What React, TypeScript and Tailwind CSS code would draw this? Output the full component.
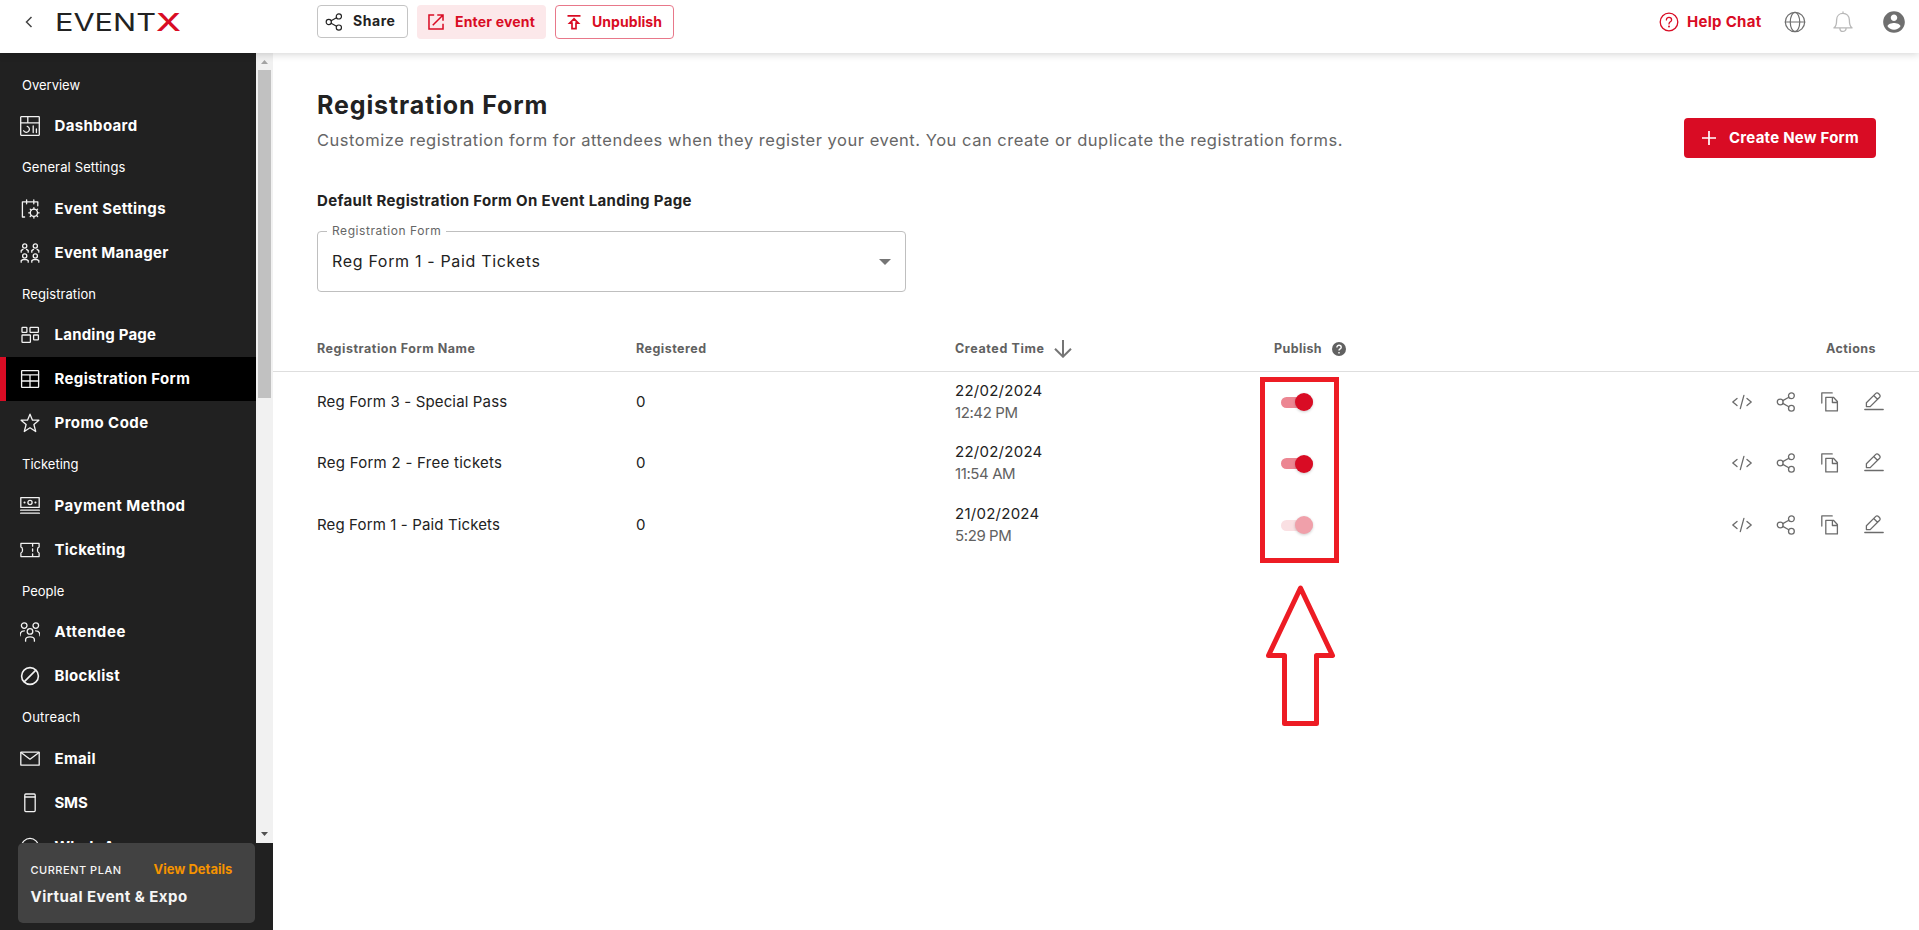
import type { ReactNode } from 'react';
import { clsx } from 'clsx';

interface IconProps {
  className?: string;
  children: ReactNode;
  size?: number;
  stroke?: number;
}

function Icon({ className, children, size = 20, stroke = 1.3 }: IconProps) {
  return (
    <svg
      width={size}
      height={size}
      viewBox="0 0 20 20"
      fill="none"
      stroke="currentColor"
      strokeWidth={stroke}
      strokeLinecap="round"
      strokeLinejoin="round"
      className={clsx('shrink-0', className)}
    >
      {children}
    </svg>
  );
}

const icons = {
  dashboard: (
    <>
      <rect x="0.7" y="0.7" width="18.6" height="18.6" rx="0.5" />
      <path d="M.7 6.9h18.6M7.8.7v6.2M7.2 10.3a3.1 3.1 0 1 1-3.6 4.5M13.2 10v6.6M16.4 13v3.6" />
    </>
  ),
  eventSettings: (
    <>
      <path d="M4.6 18H2.4V2.8h15.4v4M6.6.8v4M13.8.8v4" />
      <circle cx="13.9" cy="13.8" r="3.6" />
      <path d="M13.9 8.6v1.4M13.9 17.6V19M8.7 13.8h1.4M17.7 13.8h1.4M10.2 10.1l1 1M16.6 16.5l1 1M17.6 10.1l-1 1M11.2 16.5l-1 1" />
    </>
  ),
  eventManager: (
    <>
      <circle cx="4.7" cy="3" r="2.1" />
      <circle cx="15.3" cy="3" r="2.1" />
      <circle cx="4.7" cy="13" r="2.1" />
      <circle cx="15.3" cy="13" r="2.1" />
      <path d="M1.2 9.2V7.6L2.9 6.4M8.2 9.2V7.6L6.5 6.4M11.8 9.2V7.6l1.7-1.2M18.8 9.2V7.6l-1.7-1.2M1.2 19.2v-1.6l1.7-1h3.6l1.7 1v1.6M11.8 19.2v-1.6l1.7-1h3.6l1.7 1v1.6" />
    </>
  ),
  landing: (
    <>
      <rect x="2" y="2.4" width="4.9" height="4.9" rx="0.6" />
      <rect x="10" y="2.4" width="8.4" height="4.9" rx="0.6" />
      <rect x="2" y="10" width="8.4" height="7.4" rx="0.6" />
      <rect x="13.6" y="10" width="4.8" height="4.9" rx="0.6" />
    </>
  ),
  form: (
    <>
      <rect x="1.6" y="1.6" width="17" height="16.8" rx="0.6" />
      <path d="M1.6 5.8h17M1.6 12h17M10 5.8v12.6" />
    </>
  ),
  star: <path d="m10 1.2 2.5 6h6.4l-5 4.3 1.8 7L10 14.8l-5.7 3.7 1.8-7-5-4.3h6.4z" />,
  payment: (
    <>
      <rect x="0.8" y="1.6" width="18.4" height="9.8" />
      <circle cx="10" cy="6.5" r="2.1" />
      <path d="M4.5 6.5h.1M15.4 6.5h.1" strokeWidth="2" />
      <path d="M.6 14.2h18.8M.6 17.2h18.8" />
    </>
  ),
  ticket: (
    <>
      <path d="M.9 3.4h18.2v3.5c-2.2.8-2.2 5.4 0 6.2v3.5H.9v-3.5c2.2-.8 2.2-5.4 0-6.2z" />
      <path d="M12.6 4v2.2M12.6 8.8v2.4M12.6 13.8V16" />
    </>
  ),
  attendee: (
    <>
      <circle cx="4.2" cy="3.6" r="2.8" />
      <circle cx="15.8" cy="3.6" r="2.8" />
      <circle cx="10" cy="9.4" r="2.8" />
      <path d="M0 13.8c0-3 1.6-5 4.4-5M20 13.8c0-3-1.6-5-4.4-5M5.6 19.2v-1.4c0-4 8.8-4 8.8 0v1.4" />
    </>
  ),
  block: (
    <>
      <circle cx="10" cy="10" r="8.4" strokeWidth="1.6" />
      <path d="M4.4 15.6 15.6 4.4" strokeWidth="1.6" />
    </>
  ),
  email: (
    <>
      <rect x="0.8" y="3.2" width="18.4" height="13" rx="0.3" />
      <path d="m1 3.6 9 6.6 9-6.6" />
    </>
  ),
  sms: (
    <>
      <rect x="4.8" y="1" width="10.4" height="17.6" rx="1" />
      <path d="M4.8 4h10.4" />
    </>
  ),
  whatsapp: <circle cx="10" cy="9.8" r="8.4" />,
};

interface NavItem {
  label: string;
  icon: ReactNode;
  tracking: string;
  active?: boolean;
}

interface NavGroup {
  title: string;
  tracking?: string;
  items: NavItem[];
}

const navGroups: NavGroup[] = [
  { title: 'Overview', items: [{ label: 'Dashboard', icon: icons.dashboard, tracking: 'tracking-[0.33px]' }] },
  {
    title: 'General Settings',
    tracking: 'tracking-[0.14px]',
    items: [
      { label: 'Event Settings', icon: icons.eventSettings, tracking: 'tracking-[0.42px]' },
      { label: 'Event Manager', icon: icons.eventManager, tracking: 'tracking-[0.28px]' },
    ],
  },
  {
    title: 'Registration',
    tracking: 'tracking-[0.08px]',
    items: [
      { label: 'Landing Page', icon: icons.landing, tracking: 'tracking-[0.22px]' },
      { label: 'Registration Form', icon: icons.form, tracking: 'tracking-[0.35px]', active: true },
      { label: 'Promo Code', icon: icons.star, tracking: 'tracking-[0.42px]' },
    ],
  },
  {
    title: 'Ticketing',
    items: [
      { label: 'Payment Method', icon: icons.payment, tracking: 'tracking-[0.47px]' },
      { label: 'Ticketing', icon: icons.ticket, tracking: 'tracking-[0.27px]' },
    ],
  },
  {
    title: 'People',
    items: [
      { label: 'Attendee', icon: icons.attendee, tracking: 'tracking-[0.6px]' },
      { label: 'Blocklist', icon: icons.block, tracking: 'tracking-[0.31px]' },
    ],
  },
  {
    title: 'Outreach',
    tracking: 'tracking-[0.23px]',
    items: [
      { label: 'Email', icon: icons.email, tracking: 'tracking-[0.37px]' },
      { label: 'SMS', icon: icons.sms, tracking: 'tracking-[-0.2px]' },
      { label: 'WhatsApp', icon: icons.whatsapp, tracking: 'tracking-[0.3px]' },
    ],
  },
];

const forms = [
  { name: 'Reg Form 3 - Special Pass', tracking: 'tracking-[0.15px]', registered: 0, date: '22/02/2024', time: '12:42 PM', locked: false },
  { name: 'Reg Form 2 - Free tickets', tracking: 'tracking-[0.27px]', registered: 0, date: '22/02/2024', time: '11:54 AM', locked: false },
  { name: 'Reg Form 1 - Paid Tickets', tracking: 'tracking-[0.13px]', registered: 0, date: '21/02/2024', time: '5:29 PM', locked: true },
];

function Logo() {
  return (
    <svg width="132" height="32" viewBox="0 0 132 32" className="font-['Inter',sans-serif]">
      <text x="0" y="24" fontSize="24" fontWeight="400" fill="#222" textLength="101" lengthAdjust="spacingAndGlyphs">EVENT</text>
      <text x="101" y="24" fontSize="24" fontWeight="500" fill="#d90c24" textLength="25" lengthAdjust="spacingAndGlyphs">X</text>
    </svg>
  );
}

function ShareIcon({ className, size }: { className?: string; size?: number }) {
  return (
    <Icon className={className} size={size}>
      <circle cx="4.2" cy="10" r="2.9" />
      <circle cx="15.4" cy="3.8" r="2.9" />
      <circle cx="15.4" cy="16.2" r="2.9" />
      <path d="m6.8 8.6 6-3.3M6.8 11.4l6 3.3" />
    </Icon>
  );
}

function Header() {
  return (
    <header className="relative z-10 flex h-[53px] shrink-0 items-start justify-between bg-white shadow-[0_1px_8px_rgba(0,0,0,0.18)]">
      <div className="flex">
        <div className="flex w-[317px] pt-[7px] pl-[24px]">
          <svg width="10" height="12" viewBox="0 0 10 12" fill="none" stroke="#444" strokeWidth="1.5" className="mt-[9px] mr-[21px]">
            <path d="M7.5 1 2.5 6l5 5" />
          </svg>
          <Logo />
        </div>
        <div className="flex items-start gap-[9px] pt-[5px] text-[14px] font-bold">
          <button className="flex h-[33px] w-[91px] items-center rounded-[4px] border border-[#c4c4c4] pl-[7px] text-[#222]">
            <ShareIcon size={18} />
            <span className="mb-[2px] ml-[10px] tracking-[0.56px]">Share</span>
          </button>
          <button className="flex h-[34px] w-[129px] items-center rounded-[4px] bg-[#fce8ea] pl-[10px] text-[#d90c24]">
            <Icon size={18} stroke={1.7}>
              <path d="M8 2.2H2.2v15.6h15.6V12M11.4 2.2h6.4v6.4M17.8 2.2 6.4 13.6" strokeLinecap="butt" strokeLinejoin="miter" />
            </Icon>
            <span className="mb-[2px] ml-[10px] tracking-[0.18px]">Enter event</span>
          </button>
          <button className="flex h-[34px] w-[119px] items-center rounded-[4px] border border-[#e8788a] pl-[11px] text-[#d90c24]">
            <svg width="14" height="16" viewBox="0 0 14 16" fill="none" stroke="currentColor" strokeWidth="1.7">
              <path d="M.5 1.8h13M7 4.8 2.6 9.2H5v5.4h4V9.2h2.4z" />
            </svg>
            <span className="mb-[2px] ml-[11px] tracking-[0.06px]">Unpublish</span>
          </button>
        </div>
      </div>
      <div className="flex h-[44px] items-center pr-[12px] text-[#6f6f6f]">
        <Icon stroke={1.3} className="text-[#d90c24]">
          <circle cx="10" cy="10" r="8.8" />
          <path d="M7.4 7.9c0-3.4 5.2-3.2 5.2 0 0 1.9-2.6 2-2.6 4" />
          <path d="M10 14.4v.1" strokeWidth="1.9" />
        </Icon>
        <span className="ml-[8px] w-[75px] text-[15px] font-bold whitespace-nowrap tracking-[0.29px] text-[#d90c24]">Help Chat</span>
        <Icon size={22} stroke={1.1} className="ml-[22px]">
          <circle cx="10" cy="10" r="8.8" />
          <ellipse cx="10" cy="10" rx="4.3" ry="8.8" />
          <path d="M1.2 10h17.6" />
        </Icon>
        <Icon size={22} stroke={1.2} className="ml-[26px] text-[#b8b8b8]">
          <path d="M10 .9v1.2M1.8 15.4c2-1.2 2.4-2.6 2.4-7.2 0-3.8 2.6-6 5.8-6s5.8 2.2 5.8 6c0 4.6.4 6 2.4 7.2zM7.2 15.6c0 4 5.6 4 5.6 0" />
        </Icon>
        <svg width="26" height="26" viewBox="0 0 24 24" fill="currentColor" className="ml-[27px]">
          <path d="M12 2C6.48 2 2 6.48 2 12s4.48 10 10 10 10-4.48 10-10S17.52 2 12 2zm0 3c1.66 0 3 1.34 3 3s-1.34 3-3 3-3-1.34-3-3 1.34-3 3-3zm0 14.2c-2.5 0-4.71-1.28-6-3.22.03-1.99 4-3.08 6-3.08 1.99 0 5.97 1.09 6 3.08-1.29 1.94-3.5 3.22-6 3.22z" />
        </svg>
      </div>
    </header>
  );
}

function Sidebar() {
  return (
    <aside className="flex w-[273px] shrink-0 flex-col bg-[#212121] text-white">
      <div className="flex h-[790px] shrink-0">
        <nav className="w-[256px] overflow-hidden pt-[12.5px]">
          {navGroups.map((group) => (
            <div key={group.title}>
              <div className={clsx('flex h-[38.5px] items-center pt-[1px] pl-[22px] text-[13px]', group.tracking)}>{group.title}</div>
              {group.items.map((item) => (
                <a
                  key={item.label}
                  className={clsx(
                    'flex h-[44px] items-center border-l-[6px] pl-[14px]',
                    item.active ? 'border-[#d90c24] bg-black' : 'border-transparent'
                  )}
                >
                  <Icon className="text-[#f2f2f2]">{item.icon}</Icon>
                  <span className={clsx('ml-[14.5px] pt-[1px] text-[15px] font-bold', item.tracking)}>{item.label}</span>
                </a>
              ))}
            </div>
          ))}
        </nav>
        {/* Scrollbar */}
        <div className="flex w-[17px] flex-col items-center justify-between bg-[#f1f1f1]">
          <div className="flex flex-col items-center">
            <svg width="17" height="17" viewBox="0 0 17 17">
              <path d="M5 11h7L8.5 7z" fill="#a3a3a3" />
            </svg>
            <div className="h-[328px] w-[13px] bg-[#c1c1c1]" />
          </div>
          <svg width="17" height="17" viewBox="0 0 17 17">
            <path d="M5 6h7l-3.5 4z" fill="#505050" />
          </svg>
        </div>
      </div>
      <div className="ml-[18px] h-[80px] w-[237px] rounded-[5px] bg-[#424242] px-[12.5px] pt-[18px] text-[#f5f5f5]">
        <div className="flex h-[18px] items-center">
          <span className="w-[123px] text-[11px] font-medium tracking-[0.51px]">CURRENT PLAN</span>
          <a className="text-[13px] font-bold text-[#f59300]">View Details</a>
        </div>
        <div className="mt-[7px] text-[15px] leading-[22px] font-bold tracking-[0.45px]">Virtual Event & Expo</div>
      </div>
    </aside>
  );
}

function Toggle({ disabled }: { disabled: boolean }) {
  return (
    <div className={clsx('mt-[1px] ml-[7px] flex h-[11px] w-[32px] items-center justify-end rounded-full', disabled ? 'bg-[#fae0e3]' : 'bg-[#ec8692]')}>
      <div className={clsx('size-[18px] shrink-0 rounded-full shadow-[0_1px_3px_rgba(0,0,0,0.2)]', disabled ? 'bg-[#f0a0aa]' : 'bg-[#d90c24]')} />
    </div>
  );
}

function RowActions() {
  return (
    <div className="flex items-center gap-[24px] text-[#6b6b6b]">
      <Icon>
        <path d="M5 6.5.8 10 5 13.5M15 6.5l4.2 3.5-4.2 3.5M11.9 3.4 8.3 16.6" />
      </Icon>
      <ShareIcon />
      <Icon>
        <path d="M1.8 11V.9h10.4M5.8 5.3h7.6l4 4.2v9.4H5.8zM12.4 5.6v4.9h4.8" />
      </Icon>
      <Icon>
        <path d="M.8 17.5h18.4M2.4 14.6v-3.8l9.4-9.4c1.7-1.7 5.5 2 3.8 3.8l-9.4 9.4zM9.7 3.5l3.8 3.8" />
      </Icon>
    </div>
  );
}

// Columns: name, registered, created time, publish, actions
const columns = 'grid grid-cols-[319px_319px_319px_1fr_auto] items-center pl-[44px]';

function FormTable() {
  return (
    <section>
      <div className={clsx(columns, 'h-[46px] border-b border-[#dedede] pt-[1px] pr-[43px] text-[12.5px] font-bold text-[#616161]')}>
        <span className="tracking-[0.53px]">Registration Form Name</span>
        <span className="tracking-[0.47px]">Registered</span>
        <span className="flex items-center tracking-[0.61px]">
          Created Time
          <svg width="18" height="18" viewBox="0 0 18 18" fill="none" stroke="#757575" strokeWidth="2" className="ml-[9px]">
            <path d="M9 0v16.5M1 8.7l8 8 8-8" />
          </svg>
        </span>
        <span className="flex items-center tracking-[0.38px]">
          Publish
          <svg width="14" height="14" viewBox="0 0 14 14" className="ml-[10px]">
            <circle cx="7" cy="7" r="7" fill="#616161" />
            <path d="M4.9 5.4c0-2.9 4.3-2.7 4.3 0 0 1.5-2.2 1.5-2.2 3.1M7 9.9v1.5" fill="none" stroke="#fff" strokeWidth="1.4" />
          </svg>
        </span>
        <span className="tracking-[0.46px]">Actions</span>
      </div>
      {forms.map((form) => (
        <div key={form.name} className={clsx(columns, 'h-[61.6px] pr-[35px] pb-[2px] text-[15px] text-[#222]')}>
          <span className={form.tracking}>{form.name}</span>
          <span>{form.registered}</span>
          <span className="flex flex-col leading-[22px]">
            <span className="tracking-[0.26px]">{form.date}</span>
            <span className="tracking-[-0.4px] text-[#616161]">{form.time}</span>
          </span>
          <Toggle disabled={form.locked} />
          <RowActions />
        </div>
      ))}
    </section>
  );
}

function Main() {
  return (
    <main className="flex-1 bg-white text-[#222]">
      <div className="flex justify-between pt-[35px] pr-[43px] pl-[44px]">
        <div>
          <h1 className="text-[25px] leading-[34px] font-bold tracking-[0.88px]">Registration Form</h1>
          <p className="mt-[6px] text-[16.5px] leading-[24px] tracking-[0.52px] text-[#666]">
            Customize registration form for attendees when they register your event. You can create or duplicate the registration forms.
          </p>
          <h2 className="mt-[39px] text-[15px] leading-[20px] font-bold tracking-[0.34px]">Default Registration Form On Event Landing Page</h2>
        </div>
        <button className="mt-[30px] flex h-[40px] w-[192px] items-center rounded-[4px] bg-[#d90c24] pl-[18px] text-white">
          <svg width="14" height="14" viewBox="0 0 14 14" stroke="currentColor" strokeWidth="1.7">
            <path d="M7 0v14M0 7h14" />
          </svg>
          <span className="ml-[13px] text-[15px] font-bold tracking-[0.24px]">Create New Form</span>
        </button>
      </div>
      <div className="relative mt-[20px] ml-[44px] flex h-[61px] w-[589px] items-center justify-between rounded-[4px] border border-[#bfbfbf] pr-[14px] pl-[14px]">
        <span className="absolute -top-[10px] left-[9px] bg-white px-[5px] text-[12px] leading-[18px] tracking-[0.56px] text-[#666]">Registration Form</span>
        <span className="mb-[2px] text-[16px] tracking-[0.67px]">Reg Form 1 - Paid Tickets</span>
        <svg width="12" height="6" viewBox="0 0 12 6">
          <path d="M0 0h12L6 6z" fill="#757575" />
        </svg>
      </div>
      <div className="mt-[34px]">
        <FormTable />
      </div>
    </main>
  );
}

export default function App() {
  return (
    <div className="relative flex h-[930px] w-[1919px] flex-col overflow-hidden bg-white font-['Inter','Open_Sans',sans-serif]">
      <Header />
      <div className="flex flex-1">
        <Sidebar />
        <Main />
      </div>
      {/* Callout around the publish switches */}
      <div className="absolute top-[377px] left-[1260px] h-[186px] w-[79px] border-[5px] border-[#ed1c24]" />
      <svg width="75" height="144" viewBox="0 0 75 144" className="absolute top-[583px] left-[1263px]" fill="none" stroke="#ed1c24" strokeWidth="5" strokeLinejoin="round">
        <path d="M37.5 5 69.5 72.5h-16v68h-32v-68h-16z" />
      </svg>
    </div>
  );
}
